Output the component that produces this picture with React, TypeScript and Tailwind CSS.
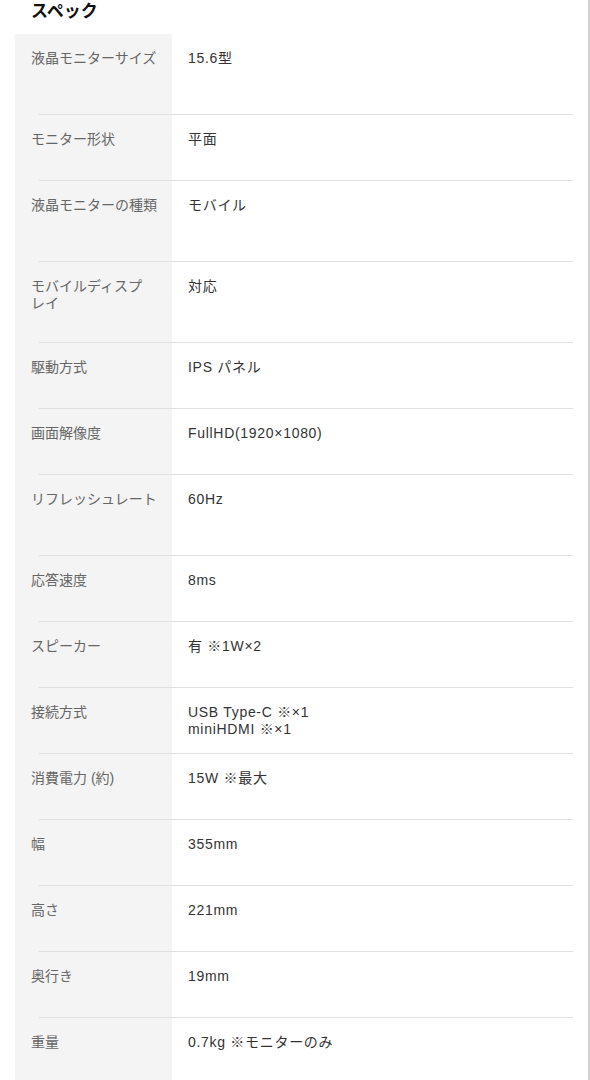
import React from 'react';

interface Spec {
  label: string;
  value: string;
  tall?: boolean;
}

const specs: Spec[] = [
  { label: '液晶モニターサイズ', value: '15.6型', tall: true },
  { label: 'モニター形状', value: '平面' },
  { label: '液晶モニターの種類', value: 'モバイル', tall: true },
  { label: 'モバイルディスプレイ', value: '対応', tall: true },
  { label: '駆動方式', value: 'IPS パネル' },
  { label: '画面解像度', value: 'FullHD(1920×1080)' },
  { label: 'リフレッシュレート', value: '60Hz', tall: true },
  { label: '応答速度', value: '8ms' },
  { label: 'スピーカー', value: '有 ※1W×2' },
  { label: '接続方式', value: 'USB Type-C ※×1\nminiHDMI ※×1' },
  { label: '消費電力 (約)', value: '15W ※最大' },
  { label: '幅', value: '355mm' },
  { label: '高さ', value: '221mm' },
  { label: '奥行き', value: '19mm' },
  { label: '重量', value: '0.7kg ※モニターのみ' },
];

const font = { fontFamily: '"Liberation Sans", "Noto Sans CJK JP", sans-serif' };

const App: React.FC = () => {
  return (
    <div className="min-h-screen bg-white border-r-2 border-[#d2d2d2] overflow-hidden" style={font}>
      <h2 className="pl-[31px] pt-[2px] text-[17px] leading-[20px] font-bold text-[#111] h-[34px]">スペック</h2>
      <div className="mx-[15px] bg-[linear-gradient(to_right,#f4f4f4_157px,#ffffff_157px)] pb-[40px]">
        {specs.map((s, i) => (
          <div key={i} className="flex flex-col">
            <div className={`flex text-[14px] leading-[17px] pt-[16px] ${s.tall ? 'h-[80px]' : 'h-[65px]'}`}>
              <div className="w-[157px] shrink-0 pl-4 pr-3 text-[#666]">
                {s.label === 'モバイルディスプレイ' ? (
                  <>モバイルディスプ<br />レイ</>
                ) : s.label}
              </div>
              <div className="pl-4 text-[#333] tracking-[0.05em] whitespace-pre-line">{s.value}</div>
            </div>
            {i < specs.length - 1 && <div className="h-px ml-[24px] bg-[#e0e0e0]" />}
          </div>
        ))}
      </div>
    </div>
  );
};

export default App;
